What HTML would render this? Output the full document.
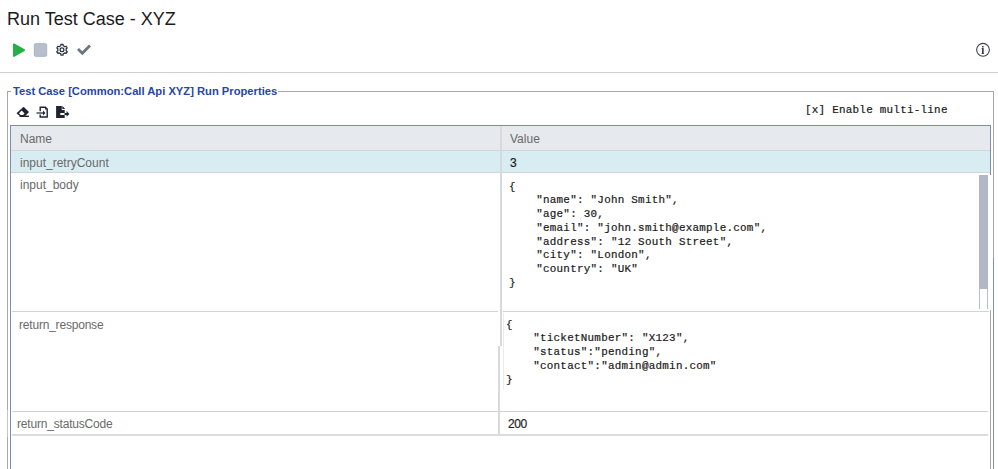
<!DOCTYPE html>
<html><head><meta charset="utf-8">
<style>
*{box-sizing:border-box;margin:0;padding:0}
html,body{width:998px;height:469px;overflow:hidden;background:#fff}
body{position:relative;font-family:"Liberation Sans",sans-serif}
.a{position:absolute}
.title{left:7px;top:9px;font-size:18px;line-height:20px;color:#1b1b1b;white-space:nowrap}
.hr{left:0;top:72px;width:998px;height:1px;background:#cfcfcf}
.fs-l{left:7px;top:91px;width:1px;height:378px;background:#a8a8a8}
.fs-t1{left:7px;top:91px;width:4px;height:1px;background:#a8a8a8}
.fs-t2{left:278px;top:91px;width:716px;height:1px;background:#a8a8a8}
.legend{left:13px;top:84px;font-size:11.2px;font-weight:bold;line-height:14px;color:#2646a6;white-space:nowrap}
.mono{font-family:"Liberation Mono",monospace;font-size:10.9px;letter-spacing:0.26px;-webkit-text-stroke:0.2px #1a1a1a;color:#1a1a1a;white-space:pre}
.cell{font-size:12px;line-height:14px;color:#6a6a6a;white-space:nowrap}
.code{font-family:"Liberation Mono",monospace;font-size:10.9px;letter-spacing:0.26px;-webkit-text-stroke:0.2px #1a1a1a;line-height:13.75px;color:#1a1a1a;white-space:pre}
</style></head><body>
<div class="a title">Run Test Case - XYZ</div>

<!-- toolbar -->
<svg class="a" style="left:0;top:0" width="998" height="72">
  <path d="M13.9 44.4 L24.1 50.1 L13.9 55.9 Z" fill="#27b045" stroke="#27b045" stroke-width="1.9" stroke-linejoin="round"/>
  <rect x="34.3" y="43.7" width="12.4" height="12.6" rx="1.2" fill="#b7bfcc" stroke="#aab3c2" stroke-width="1"/>
  <path d="M59.90 46.16 L60.84 45.76 L60.95 44.40 L63.05 44.40 L63.16 45.76 L64.10 46.16 L64.92 46.78 L66.15 46.19 L67.20 48.01 L66.08 48.78 L66.20 49.80 L66.08 50.82 L67.20 51.59 L66.15 53.41 L64.92 52.82 L64.10 53.44 L63.16 53.84 L63.05 55.20 L60.95 55.20 L60.84 53.84 L59.90 53.44 L59.08 52.82 L57.85 53.41 L56.80 51.59 L57.92 50.82 L57.80 49.80 L57.92 48.78 L56.80 48.01 L57.85 46.19 L59.08 46.78 Z" fill="none" stroke="#2b3240" stroke-width="1.25" stroke-linejoin="round"/>
  <circle cx="62" cy="49.8" r="1.9" fill="none" stroke="#2b3240" stroke-width="1.25"/>
  <path d="M78 49 L82.3 53.2 L90 45.6" fill="none" stroke="#6b7482" stroke-width="2.8" stroke-linecap="butt" stroke-linejoin="miter"/>
  <circle cx="983" cy="49.8" r="6.4" fill="none" stroke="#3d4450" stroke-width="1.1"/>
  <rect x="982" y="46" width="1.7" height="1.4" fill="#3d4450"/>
  <path d="M981.6 48.1 L983.7 48.1 L983.7 53.2 L984.1 53.2 L984.1 54 L981.6 54 L981.6 53.2 L982 53.2 L982 48.8 L981.6 48.8 Z" fill="#3d4450"/>
</svg>
<div class="a hr"></div>

<!-- fieldset -->
<div class="a fs-l"></div>
<div class="a fs-t1"></div>
<div class="a" style="left:7px;top:410px;width:1px;height:27px;background:#c6c6c6"></div>
<div class="a fs-t2"></div>
<div class="a" style="left:993px;top:91px;width:1px;height:167px;background:#a8a8a8"></div>
<div class="a" style="left:993px;top:258px;width:1px;height:211px;background:#8592a8"></div>
<div class="a legend">Test Case [Common:Call Api XYZ] Run Properties</div>

<!-- icons row 2 -->
<svg class="a" style="left:0;top:0" width="80" height="125">
  <g fill="#1f2430">
    <path fill-rule="evenodd" d="M23.6 106.8 L29 112.1 L25.2 115.9 L19.8 115.9 L16.5 113.2 Z M19 113.3 L21.7 110.6 L24.5 113.4 L23.1 114.9 L20.6 114.9 Z"/>
    <rect x="19.6" y="115.6" width="9.3" height="1.4"/>
  </g>
  <path d="M40.2 111.3 L40.2 107.2 L45.4 107.2 L47.2 109 L47.2 117 L40.2 117 L40.2 114.6" fill="none" stroke="#1f2430" stroke-width="1.4"/>
  <path d="M45 107.5 L47 109.5 L45 109.5 Z" fill="#1f2430"/>
  <path d="M36.5 113 L43.3 113" stroke="#2a303c" stroke-width="1.3"/>
  <path d="M43 110.6 L45.4 113 L43 115.4 Z" fill="#1f2430"/>
  <g fill="#1f2430">
    <path d="M56.1 106 L61.8 106 L61.8 109.9 L64.7 109.9 L64.7 112.9 L60.3 112.9 L60.3 115 L64.7 115 L64.7 117.9 L56.1 117.9 Z"/>
    <path d="M62.3 105.8 L65.1 109.1 L62.3 109.1 Z"/>
    <path d="M64.5 113 L66.6 113 L66.6 111 L69.4 113.9 L66.6 116.8 L66.6 114.9 L64.5 114.9 Z"/>
  </g>
</svg>
<div class="a mono" style="left:805px;top:104px;line-height:13px">[x] Enable multi-line</div>

<!-- table -->
<div class="a" style="left:10px;top:125px;width:981px;height:1px;background:#7f8ea6"></div>
<div class="a" style="left:10px;top:125px;width:1px;height:344px;background:#7f8ea6"></div>
<div class="a" style="left:990px;top:125px;width:1px;height:50px;background:#7f8ea6"></div>
<div class="a" style="left:11px;top:126px;width:979px;height:24px;background:#e6e9ee"></div>
<div class="a" style="left:11px;top:150px;width:979px;height:1px;background:#d2d5da"></div>
<div class="a" style="left:11px;top:151px;width:979px;height:21px;background:#d8edf1"></div>
<div class="a" style="left:11px;top:172px;width:979px;height:1px;background:#d2d5da"></div>
<div class="a" style="left:500px;top:126px;width:2px;height:220px;background:#d8d9dc"></div>
<div class="a cell" style="left:20px;top:132px">Name</div>
<div class="a cell" style="left:510px;top:132px">Value</div>
<div class="a cell" style="left:20px;top:156px">input_retryCount</div>
<div class="a cell" style="left:510px;top:156px;color:#1e1e1e;-webkit-text-stroke:0.2px #1e1e1e">3</div>
<div class="a cell" style="left:20px;top:178px">input_body</div>

<!-- textarea 1 -->
<div class="a code" style="left:509px;top:180.5px">{
    "name": "John Smith",
    "age": 30,
    "email": "john.smith@example.com",
    "address": "12 South Street",
    "city": "London",
    "country": "UK"
}</div>
<div class="a" style="left:979px;top:175px;width:9px;height:114px;background:#b1b8c6"></div>
<div class="a" style="left:979px;top:289px;width:1px;height:20px;background:#b8bfcc"></div>
<div class="a" style="left:987px;top:289px;width:1px;height:20px;background:#b8bfcc"></div>

<!-- row 3 -->
<div class="a" style="left:12px;top:311px;width:486px;height:1px;background:#d2d2d2"></div>
<div class="a" style="left:503px;top:311px;width:486px;height:1px;background:#d2d2d2"></div>
<div class="a" style="left:498px;top:346px;width:2px;height:89px;background:#d8d9dc"></div>
<div class="a" style="left:503px;top:313px;width:1px;height:76px;background:#ececec"></div>
<div class="a" style="left:990px;top:310px;width:1px;height:159px;background:#a8a8a8"></div>
<div class="a cell" style="left:19px;top:317.5px;letter-spacing:-0.2px">return_response</div>
<div class="a code" style="left:506px;top:318.5px">{
    "ticketNumber": "X123",
    "status":"pending",
    "contact":"admin@admin.com"
}</div>

<!-- row 4 -->
<div class="a" style="left:12px;top:411px;width:976px;height:1px;background:#d2d2d2"></div>
<div class="a" style="left:12px;top:434px;width:976px;height:2px;background:#dcdcdc"></div>
<div class="a cell" style="left:17px;top:417px;letter-spacing:-0.19px">return_statusCode</div>
<div class="a cell" style="left:508px;top:417px;color:#1e1e1e;letter-spacing:-0.4px;-webkit-text-stroke:0.2px #1e1e1e">200</div>
</body></html>
